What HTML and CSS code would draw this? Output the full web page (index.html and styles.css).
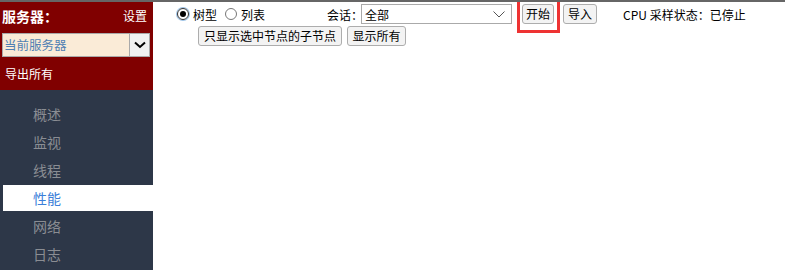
FILE: index.html
```html
<!DOCTYPE html>
<html>
<head>
  <title>性能</title>
  <link rel="stylesheet" href="styles.css">
</head>
<body>
  <div class="page">
    <div class="sidebar">
      <div class="server-box">
        <div class="server-head">
          <span class="server-title">服务器：</span>
          <span class="server-settings">设置</span>
        </div>
        <div class="server-select">
          <span class="server-current">当前服务器</span>
          <span class="server-arrow">
            <svg width="12" height="8" viewBox="0 0 12 8"><path d="M1 1.5 L6 6 L11 1.5" fill="none" stroke="#000" stroke-width="2"/></svg>
          </span>
        </div>
        <div class="server-export">导出所有</div>
      </div>
      <ul class="nav">
        <li>概述</li>
        <li>监视</li>
        <li>线程</li>
        <li class="active">性能</li>
        <li>网络</li>
        <li>日志</li>
      </ul>
    </div>

    <div class="main">
      <div class="toolbar">
        <span class="radio checked"></span>
        <span class="radio-label">树型</span>
        <span class="radio"></span>
        <span class="radio-label">列表</span>
        <span class="session-label">会话：</span>
        <div class="session-select">
          <span class="session-value">全部</span>
          <svg width="12" height="7" viewBox="0 0 12 7"><path d="M0.5 0.5 L6 6 L11.5 0.5" fill="none" stroke="#555" stroke-width="1"/></svg>
        </div>
        <span class="btn-wrap">
          <button class="btn btn-start">开始</button>
          <span class="highlight"></span>
        </span>
        <button class="btn btn-import">导入</button>
        <span class="status">CPU 采样状态：已停止</span>
      </div>
      <div class="toolbar second">
        <button class="btn btn-wide">只显示选中节点的子节点</button>
        <button class="btn btn-all">显示所有</button>
      </div>
    </div>
  </div>
</body>
</html>
```

FILE: styles.css
```css
body {
  margin: 0;
  font-family: "Noto Sans CJK SC", "Liberation Sans", sans-serif;
  font-size: 12px;
  color: #000;
  background: #fff;
}

.page {
  display: flex;
  height: 268px;
  border-top: 2px solid #666;
  overflow: hidden;
}

/* sidebar */
.sidebar {
  width: 153px;
  flex-shrink: 0;
  background: #2d3748;
}

.server-box {
  background: #800000;
  padding: 4px 6px 6px 2px;
  color: #fff;
}

.server-head {
  display: flex;
  justify-content: space-between;
  line-height: 20px;
}

.server-title {
  font-size: 14px;
  font-weight: bold;
}

.server-settings {
  font-size: 12px;
}

.server-select {
  display: flex;
  margin-top: 7px;
  width: 148px;
  height: 24px;
  box-sizing: border-box;
  border: 1px solid #a9a9a9;
  background: #faebd7;
}

.server-current {
  flex: 1;
  padding-left: 1px;
  line-height: 22px;
  color: #4f7fb3;
  font-size: 12.5px;
}

.server-arrow {
  width: 19px;
  display: flex;
  align-items: center;
  justify-content: center;
  background: #f0f0f0;
  border-left: 1px solid #a9a9a9;
}

.server-export {
  margin-top: 7px;
  padding-left: 3px;
  line-height: 20px;
}

.nav {
  list-style: none;
  margin: 0;
  padding: 11px 0 0 3px;
}

.nav li {
  height: 26px;
  line-height: 26px;
  margin-bottom: 2px;
  padding-left: 30px;
  font-size: 14px;
  color: #8a8d93;
}

.nav li.active {
  background: #fff;
  color: #3c7fd9;
}

/* main */
.main {
  flex: 1;
  padding-top: 2px;
}

.toolbar {
  display: flex;
  align-items: center;
  height: 20px;
  white-space: nowrap;
}

.toolbar > * {
  flex-shrink: 0;
}

.toolbar.second {
  margin-top: 2px;
  padding-left: 45px;
  gap: 5px;
}

.radio {
  width: 12px;
  height: 12px;
  box-sizing: border-box;
  border: 1px solid #777;
  border-radius: 50%;
  margin-left: 24px;
  position: relative;
}

.radio + .radio-label {
  margin-left: 4px;
}

.radio-label + .radio {
  margin-left: 8px;
}

.radio.checked {
  border-color: #333;
  box-shadow: 0 0 0 1px #9ec3e6;
}

.radio.checked::after {
  content: "";
  position: absolute;
  left: 2px;
  top: 2px;
  width: 6px;
  height: 6px;
  border-radius: 50%;
  background: #000;
}

.session-label {
  margin-left: 62px;
  margin-right: -2px;
}

.session-select {
  display: flex;
  align-items: center;
  width: 151px;
  height: 20px;
  box-sizing: border-box;
  border: 1px solid #aaa;
  padding: 0 6px 0 3px;
}

.session-value {
  flex: 1;
}

.btn {
  height: 20px;
  padding: 0 3px;
  border: 1px solid #adadad;
  border-radius: 3px;
  background: #f3f3f3;
  font-family: inherit;
  font-size: 12px;
  line-height: 18px;
  color: #000;
}

.btn-wrap {
  position: relative;
  margin-left: 10px;
  display: flex;
}

.highlight {
  position: absolute;
  left: -5px;
  right: -6px;
  top: -6px;
  bottom: -9px;
  border: 3px solid #ee3333;
}

.btn-import {
  margin-left: 9px;
  padding: 0 4px;
}

.btn-wide {
  padding: 0 5px;
}

.btn-all {
  width: 59px;
}

.status {
  margin-left: 26px;
}
```
